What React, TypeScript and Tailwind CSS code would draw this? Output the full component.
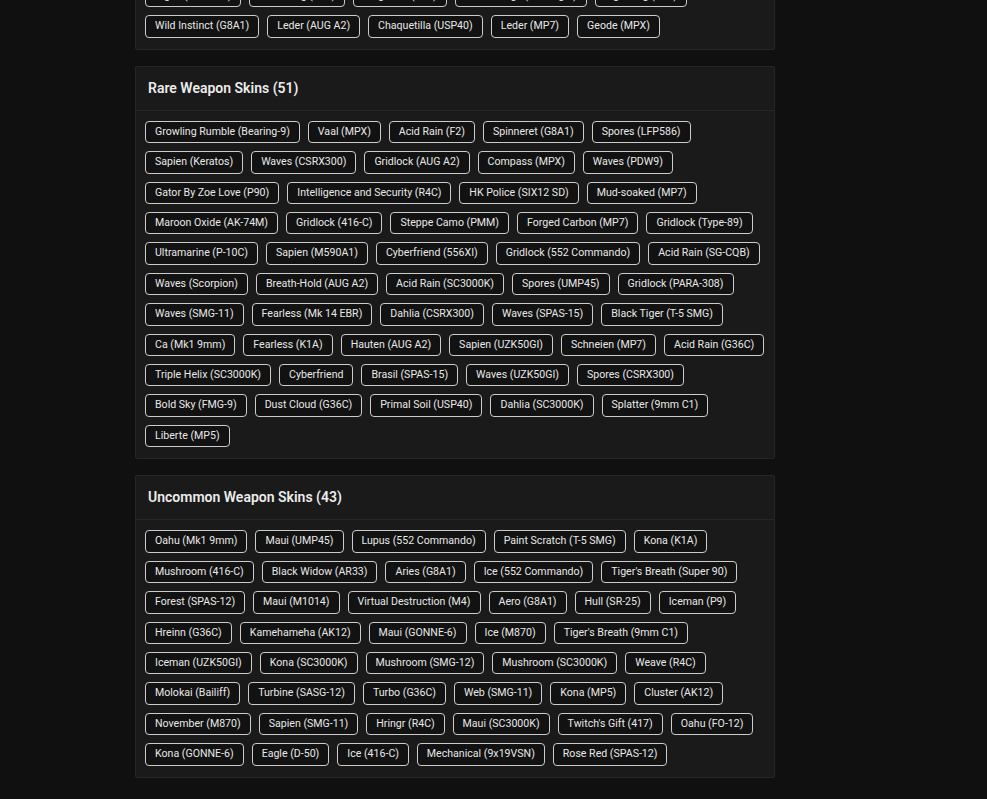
const partialTop = [
  ["Tigris (M590A1)", "Swarming (P90)", "Fragment (P12)", "Camouflage (Bearing-9)", "Lightning (P12)"],
  ["Wild Instinct (G8A1)", "Leder (AUG A2)", "Chaquetilla (USP40)", "Leder (MP7)", "Geode (MPX)"],
];

// rows as laid out on the page
const rareSkins = [
  ["Growling Rumble (Bearing-9)", "Vaal (MPX)", "Acid Rain (F2)", "Spinneret (G8A1)", "Spores (LFP586)"],
  ["Sapien (Keratos)", "Waves (CSRX300)", "Gridlock (AUG A2)", "Compass (MPX)", "Waves (PDW9)"],
  ["Gator By Zoe Love (P90)", "Intelligence and Security (R4C)", "HK Police (SIX12 SD)", "Mud-soaked (MP7)"],
  ["Maroon Oxide (AK-74M)", "Gridlock (416-C)", "Steppe Camo (PMM)", "Forged Carbon (MP7)", "Gridlock (Type-89)"],
  ["Ultramarine (P-10C)", "Sapien (M590A1)", "Cyberfriend (556XI)", "Gridlock (552 Commando)", "Acid Rain (SG-CQB)"],
  ["Waves (Scorpion)", "Breath-Hold (AUG A2)", "Acid Rain (SC3000K)", "Spores (UMP45)", "Gridlock (PARA-308)"],
  ["Waves (SMG-11)", "Fearless (Mk 14 EBR)", "Dahlia (CSRX300)", "Waves (SPAS-15)", "Black Tiger (T-5 SMG)"],
  ["Ca (Mk1 9mm)", "Fearless (K1A)", "Hauten (AUG A2)", "Sapien (UZK50GI)", "Schneien (MP7)", "Acid Rain (G36C)"],
  ["Triple Helix (SC3000K)", "Cyberfriend", "Brasil (SPAS-15)", "Waves (UZK50GI)", "Spores (CSRX300)"],
  ["Bold Sky (FMG-9)", "Dust Cloud (G36C)", "Primal Soil (USP40)", "Dahlia (SC3000K)", "Splatter (9mm C1)"],
  ["Liberte (MP5)"],
];

const uncommonSkins = [
  ["Oahu (Mk1 9mm)", "Maui (UMP45)", "Lupus (552 Commando)", "Paint Scratch (T-5 SMG)", "Kona (K1A)"],
  ["Mushroom (416-C)", "Black Widow (AR33)", "Aries (G8A1)", "Ice (552 Commando)", "Tiger's Breath (Super 90)"],
  ["Forest (SPAS-12)", "Maui (M1014)", "Virtual Destruction (M4)", "Aero (G8A1)", "Hull (SR-25)", "Iceman (P9)"],
  ["Hreinn (G36C)", "Kamehameha (AK12)", "Maui (GONNE-6)", "Ice (M870)", "Tiger's Breath (9mm C1)"],
  ["Iceman (UZK50GI)", "Kona (SC3000K)", "Mushroom (SMG-12)", "Mushroom (SC3000K)", "Weave (R4C)"],
  ["Molokai (Bailiff)", "Turbine (SASG-12)", "Turbo (G36C)", "Web (SMG-11)", "Kona (MP5)", "Cluster (AK12)"],
  ["November (M870)", "Sapien (SMG-11)", "Hringr (R4C)", "Maui (SC3000K)", "Twitch's Gift (417)", "Oahu (FO-12)"],
  ["Kona (GONNE-6)", "Eagle (D-50)", "Ice (416-C)", "Mechanical (9x19VSN)", "Rose Red (SPAS-12)"],
];

const count = (rows: string[][]) => rows.reduce((n, r) => n + r.length, 0);

const Chip = ({ name }: { name: string }) => (
  <span className="px-[9px] py-[2px] leading-[16.4px] text-[10.6px] text-[#e8e8e8] bg-[#121212] border border-[#cccccc] rounded-[4px] whitespace-nowrap">
    {name}
  </span>
);

const ChipRows = ({ rows }: { rows: string[][] }) => (
  <div className="px-[9px] pt-[10px] pb-[11px] flex flex-col gap-2">
    {rows.map((row, i) => (
      <div key={i} className="flex gap-2">
        {row.map((s) => (
          <Chip key={s} name={s} />
        ))}
      </div>
    ))}
  </div>
);

const SkinCard = ({ title, rows }: { title: string; rows: string[][] }) => (
  <section className="bg-[#1a1a1a] border border-[#262626] rounded-[2px]">
    <div className="h-[44px] px-3 flex items-center border-b border-[#262626]">
      <h2 className="text-[14px] font-semibold text-[#ececec]">{title}</h2>
    </div>
    <ChipRows rows={rows} />
  </section>
);

export default function App() {
  return (
    <div className="min-h-screen bg-[#101010] overflow-hidden font-['Roboto',sans-serif]">
      <div className="w-[640px] ml-[135px] flex flex-col gap-4 pb-6">
        {/* previous card, scrolled mostly out of view */}
        <section className="-mt-[26px] bg-[#1a1a1a] border border-[#262626] rounded-[2px]">
          <ChipRows rows={partialTop} />
        </section>

        <SkinCard title={`Rare Weapon Skins (${count(rareSkins)})`} rows={rareSkins} />
        <SkinCard title={`Uncommon Weapon Skins (${count(uncommonSkins)})`} rows={uncommonSkins} />
      </div>
    </div>
  );
}
